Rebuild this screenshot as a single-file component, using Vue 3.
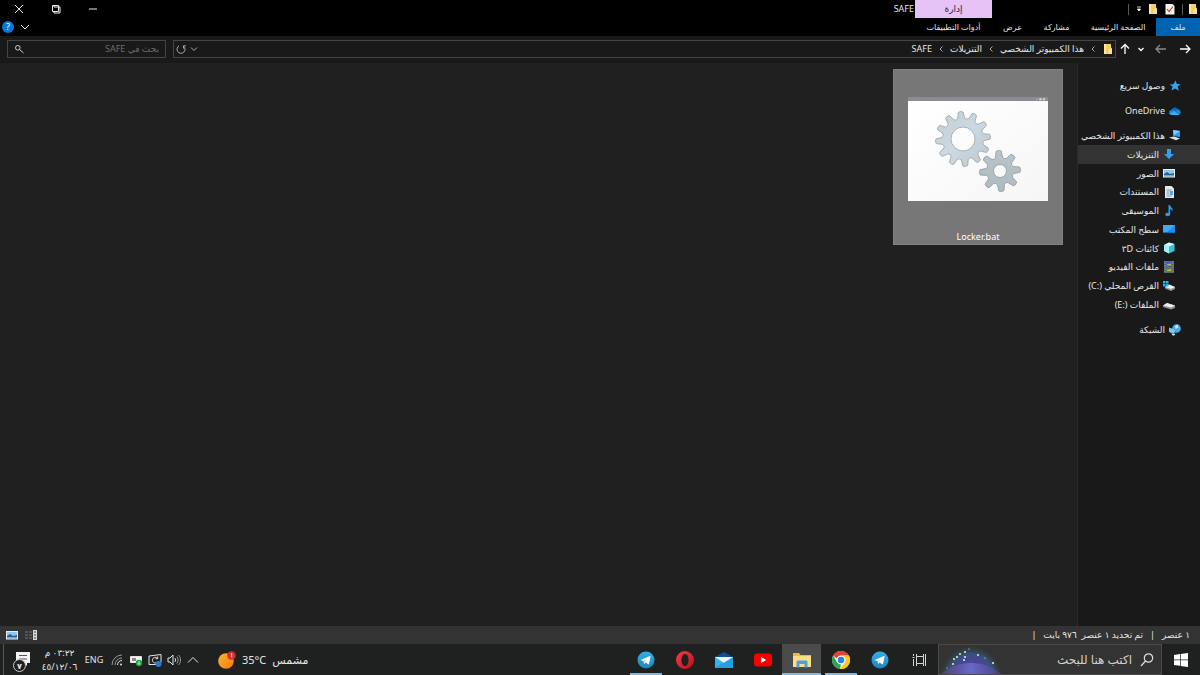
<script setup>
import { ref } from 'vue'

const folderSearch = ref('')
const taskSearch = ref('')
const activeTab = ref('tools')
const selectedPlace = ref('downloads')

const tabs = [
  { id: 'main', label: 'ملف' },
  { id: 'home', label: 'الصفحة الرئيسية' },
  { id: 'share', label: 'مشاركة' },
  { id: 'view', label: 'عرض' },
  { id: 'tools', label: 'أدوات التطبيقات' },
]

const crumbs = ['هذا الكمبيوتر الشخصي', 'التنزيلات', 'SAFE']

const places = [
  { id: 'pc', label: 'هذا الكمبيوتر الشخصي', root: true },
  { id: 'downloads', label: 'التنزيلات' },
  { id: 'pictures', label: 'الصور' },
  { id: 'documents', label: 'المستندات' },
  { id: 'music', label: 'الموسيقى' },
  { id: 'desktop', label: 'سطح المكتب' },
  { id: 'objects', label: 'كائنات', extra: '٣D' },
  { id: 'videos', label: 'ملفات الفيديو' },
  { id: 'diskc', label: 'القرص المحلي', extra: '(C:)' },
  { id: 'diske', label: 'الملفات', extra: '(E:)' },
]

const apps = [
  { id: 'taskview', icon: 'taskview', name: 'عرض المهام' },
  { id: 'tg1', icon: 'telegram', name: 'Telegram' },
  { id: 'chrome', icon: 'chrome', name: 'Chrome', open: true },
  { id: 'explorer', icon: 'explorer', name: 'مستكشف الملفات', active: true },
  { id: 'youtube', icon: 'youtube', name: 'YouTube' },
  { id: 'mail', icon: 'mail', name: 'البريد' },
  { id: 'opera', icon: 'opera', name: 'Opera' },
  { id: 'tg2', icon: 'telegram', name: 'Telegram', open: true },
]

// gear outline with a round hole, drawn around (cx, cy)
function gear(cx, cy, outer, inner, hole, teeth, turn) {
  const step = 360 / teeth
  const at = (r, deg) => {
    const a = ((deg + turn - 90) * Math.PI) / 180
    return (cx + r * Math.cos(a)).toFixed(2) + ' ' + (cy + r * Math.sin(a)).toFixed(2)
  }
  let d = ''
  for (let i = 0; i < teeth; i++) {
    const a = i * step
    d += (i ? 'L' : 'M') + at(inner, a - step * 0.32)
    d += 'L' + at(outer - 1, a - step * 0.17)
    d += 'Q' + at(outer + 0.5, a) + ' ' + at(outer - 1, a + step * 0.17)
    d += 'L' + at(inner, a + step * 0.32)
    d += 'Q' + at(inner - 1.5, a + step * 0.5) + ' ' + at(inner, a + step * 0.68)
  }
  d += 'Z M' + (cx - hole) + ' ' + cy
  d += `a${hole} ${hole} 0 1 0 ${hole * 2} 0a${hole} ${hole} 0 1 0 ${-hole * 2} 0Z`
  return d
}

const bigGear = gear(55, 38, 28, 21, 12, 12, -5)
const smallGear = gear(92, 70, 21, 14, 6.5, 8, -4)

const sparks = [
  [21, 9, 1], [26, 7, 1], [30, 4, 0.6], [15, 14, 1], [25, 15, 1], [18, 12, 1],
  [14, 19, 1], [39, 10, 1], [54, 18, 1], [8, 23, 0.6], [46, 13, 0.6], [26, 12, 1],
]
</script>

<template>
  <div class="screen" dir="rtl">
    <svg class="sprite" aria-hidden="true">
      <defs>
        <linearGradient id="gPaper" x1="0" y1="0" x2="1" y2="1"><stop offset="0" stop-color="#fff" /><stop offset="1" stop-color="#f6f6f7" /></linearGradient>
        <linearGradient id="gGear" x1="0" y1="0" x2="1" y2="1"><stop offset="0" stop-color="#c4ccd2" /><stop offset=".5" stop-color="#ccd9e2" /><stop offset="1" stop-color="#bcc6cd" /></linearGradient>
        <linearGradient id="gGear2" x1="0" y1="0" x2="0" y2="1"><stop offset="0" stop-color="#bac4ca" /><stop offset="1" stop-color="#aebac1" /></linearGradient>
        <linearGradient id="gTg" x1="0" y1="0" x2="0" y2="1"><stop offset="0" stop-color="#37aee2" /><stop offset="1" stop-color="#1b86c0" /></linearGradient>
        <linearGradient id="gOpera" x1="0" y1="0" x2="1" y2="1"><stop offset="0" stop-color="#ff3a45" /><stop offset="1" stop-color="#b3121d" /></linearGradient>
        <linearGradient id="gSun" x1="0" y1="0" x2="1" y2="1"><stop offset="0" stop-color="#ffb52b" /><stop offset="1" stop-color="#f27a12" /></linearGradient>
        <radialGradient id="gDome" cx=".5" cy=".5" r=".5"><stop offset="0" stop-color="#5a56b0" /><stop offset=".55" stop-color="#4a4494" /><stop offset=".75" stop-color="#38507c" /><stop offset="1" stop-color="#33473c" stop-opacity="0" /></radialGradient>
        <linearGradient id="gHill" x1="0" y1="0" x2="1" y2="0"><stop offset="0" stop-color="#5c3f72" stop-opacity=".5" /><stop offset=".5" stop-color="#6b72cc" stop-opacity=".8" /><stop offset="1" stop-color="#4f4388" stop-opacity=".5" /></linearGradient>
      </defs>
      <symbol id="i-folder" viewBox="0 0 12 12">
        <path d="M2 1h7v2l1 8H2z" fill="#f5cf62" /><path d="M2 1h2v10H2z" fill="#ffe9a2" /><path d="M7 6l3-1v6H6z" fill="#ffe08a" />
      </symbol>
      <symbol id="i-check" viewBox="0 0 12 12">
        <path d="M1.500 1h7l2 2v8.500h-9z" fill="#f4f1f1" /><path d="M3 6l2 2.500 4-5" fill="none" stroke="#cf3f2c" stroke-width="1.200" />
      </symbol>
      <symbol id="i-star" viewBox="0 0 12 12">
        <path d="M6.600.5l1.200 3.600 3.900.1-3.100 2.400 1.200 4.200-3.600-2.200-3.700 2 1.100-4L.6 4.500l3.900-.3z" fill="#37a5ee" />
      </symbol>
      <symbol id="i-cloud" viewBox="0 0 12 9">
        <path d="M2.500 8.500a2.500 2.500 0 010-5A3.700 3.700 0 019 2.800a2.900 2.900 0 01.5 5.700z" fill="#1a86d8" /><path d="M1 7.500l4-3 5 4H2.500z" fill="#35b1f4" /><path d="M3 2.500A3.500 3.500 0 019 2.800L6 4.500z" fill="#0f62b0" />
      </symbol>
      <symbol id="i-pc" viewBox="0 0 12 12">
        <path d="M4 1l7 1v6L4 7z" fill="#2b9df0" /><path d="M4 1l7 1-6 4z" fill="#7fd0ff" /><path d="M0 8.500l5-1 6 2-4 1.800z" fill="#dce3e8" />
      </symbol>
      <symbol id="i-downloads" viewBox="0 0 12 12"><path d="M4 1h4v5h3L6 11 1 6h3z" fill="#3a9bea" /></symbol>
      <symbol id="i-pictures" viewBox="0 0 12 12">
        <path d="M0 2h12v8.500H0z" fill="#e8eef3" /><path d="M1 3h10v6.500H1z" fill="#8dc6f2" /><path d="M1 7l3-2 3 2 4-1v3.500H1z" fill="#2c608c" /><path d="M1 8.500h10v1H1z" fill="#d4e7f5" />
      </symbol>
      <symbol id="i-documents" viewBox="0 0 12 12">
        <path d="M2 0h6.500L11 2.500V12H2z" fill="#e3eaf0" /><path d="M3.500 4h5M3.500 6h3M3.500 8h3M3.500 10h5" stroke="#6f9ab8" /><path d="M7 5h3v4H7z" fill="#5fa6d8" />
      </symbol>
      <symbol id="i-music" viewBox="0 0 12 12"><path d="M5.500 0h1.500c0 2 3.500 2.500 2.500 6.500C9 5 8 4.300 7.200 4v5c0 3-5 2.800-5 .5C2.200 8 4.500 7.300 5.500 8z" fill="#259df0" /></symbol>
      <symbol id="i-desktop" viewBox="0 0 12 12"><path d="M0 2h12v8H0z" fill="#1f8fe6" /><path d="M0 2h12L3 10H0z" fill="#3fa9f5" /><path d="M0 9h12v1H0z" fill="#1473bd" /></symbol>
      <symbol id="i-objects" viewBox="0 0 12 12"><path d="M1 3l5-2.500L11.500 2v7L6 11.500 1 9z" fill="#39c1dc" /><path d="M1 3l5 1.500v7L1 9z" fill="#a9eef7" /><path d="M1 3l5-2.500L11.500 2 6 4.500z" fill="#d6f9fc" /></symbol>
      <symbol id="i-videos" viewBox="0 0 12 12">
        <path d="M1 0h10v12H1z" fill="#5b6670" /><path d="M3 1h6v4.500H3z" fill="#4b5fc0" /><path d="M3 6.500h6V11H3z" fill="#5d7f4a" /><path d="M4 3.500l4-1v2H4zM4 9l4-1v2H4z" fill="#c3b64e" /><path d="M2 0v12M10 0v12" stroke="#8d98a0" stroke-dasharray="1 1" />
      </symbol>
      <symbol id="i-diskc" viewBox="0 0 12 12">
        <path d="M2 7l4-2.500L12 7v2L8 11 2 8.500z" fill="#8d9398" /><path d="M2 7l4-2.500L12 7 8 9z" fill="#eef0f1" /><path d="M0 1h2.500v2.500H0zM3 1h2.500v2.500H3zM0 4h2.500v2.500H0zM3 4h2.500v2.500H3z" fill="#27b5ea" />
      </symbol>
      <symbol id="i-diske" viewBox="0 0 12 12"><path d="M0 6.500L4 4l8 2.500V9l-4 1.500L0 8z" fill="#8d9398" /><path d="M0 6.500L4 4l8 2.500-4 2z" fill="#eef0f1" /></symbol>
      <symbol id="i-network" viewBox="0 0 12 12">
        <circle cx="7.500" cy="4.500" r="4.300" fill="#4aa9e4" /><path d="M6 2l2.500-1.500 1 3L6.500 5z" fill="#bfe6f8" /><path d="M0 3.500l5.500 2v4.500L0 8z" fill="#6ccdf7" /><path d="M2 9.500L6 10v1l-2 .8z" fill="#cfd8dd" />
      </symbol>
      <symbol id="i-telegram" viewBox="0 0 18 18">
        <circle cx="9" cy="9" r="8.500" fill="url(#gTg)" /><path d="M3.500 9l9.500-4c.5-.1.7.2.6.6L12 13c-.1.400-.5.500-.8.300L8.700 11.500l-1.300 1.300c-.2.200-.5.100-.5-.2l-.2-2.400z" fill="#fff" /><path d="M6.700 10.200l5-3.500-3.700 4-.6 2z" fill="#bfdff0" />
      </symbol>
      <symbol id="i-chrome" viewBox="0 0 18 18">
        <circle cx="9" cy="9" r="9" fill="#fff" />
        <path d="M1.200 4.500a9 9 0 0115.600 0H9a4.500 4.500 0 00-4.200 3z" fill="#e8412f" /><path d="M1.200 4.500L5.100 11.200A4.500 4.500 0 009 13.500l-1 4.450A9 9 0 011.200 4.500z" fill="#31a350" /><path d="M16.800 4.500A9 9 0 018 17.950l4.900-6.700A4.500 4.500 0 0012.300 6L9 4.500z" fill="#fbc91c" />
        <circle cx="9" cy="9" r="4.300" fill="#fff" /><circle cx="9" cy="9" r="3.300" fill="#2f7de9" />
      </symbol>
      <symbol id="i-explorer" viewBox="0 0 18 18">
        <path d="M0 2h6l1.500 2H18v12H0z" fill="#f0b93c" /><path d="M0 5h18v11H0z" fill="#ffdf86" /><path d="M3.500 16.500V11c0-1 .5-1.500 1.500-1.500h8c1 0 1.500.5 1.500 1.500v5.500h-3V13h-5v3.500z" fill="#4aa3df" />
      </symbol>
      <symbol id="i-youtube" viewBox="0 0 18 18"><rect y="2.500" width="18" height="13" rx="3" fill="#f70000" /><path d="M7 6l5.200 3L7 12z" fill="#fff" /></symbol>
      <symbol id="i-mail" viewBox="0 0 18 18">
        <path d="M0 6l9-5 9 5v3H0z" fill="#0f4f95" /><path d="M0 6h18v11H0z" fill="#37b2f0" /><path d="M0 6h18l-9 6z" fill="#eaf6fd" /><path d="M0 17L18 6v11z" fill="#1687d2" opacity=".5" />
      </symbol>
      <symbol id="i-opera" viewBox="0 0 18 18"><path d="M9 0a9 9 0 100 18A9 9 0 009 0zm0 3c2.200 0 3.500 2.600 3.500 6S11.200 15 9 15s-3.500-2.600-3.500-6S6.800 3 9 3z" fill="url(#gOpera)" fill-rule="evenodd" /></symbol>
      <symbol id="i-taskview" viewBox="0 0 18 18"><path d="M6.500 3v2.500h7V3M6.500 15v-2.500h7V15M6.500 5.500v7M13.500 5.500v7M3.500 3v2M3.500 8v7M2.500 6.500h2M15.500 3v12" fill="none" stroke="#d6d6d6" /></symbol>
    </svg>

    <header class="ribbon">
      <div class="title-row">
        <svg class="ic first"><use href="#i-folder" /></svg>
        <i class="sep"></i>
        <button class="quick" aria-label="خصائص"><svg class="ic"><use href="#i-check" /></svg></button>
        <button class="quick" aria-label="مجلد جديد"><svg class="ic"><use href="#i-folder" /></svg></button>
        <button class="quick small" aria-label="تخصيص"><svg viewBox="0 0 6 6" class="tiny"><path d="M1 1h4M1.500 3h3L3 5z" stroke="#fff" stroke-width=".8" fill="#fff" /></svg></button>
        <i class="sep"></i>
        <div class="manage">إدارة</div>
        <span class="win-title">SAFE</span>
        <div class="win-buttons">
          <button aria-label="تصغير"><svg viewBox="0 0 10 10"><path d="M1 5h8" /></svg></button>
          <button aria-label="استعادة"><svg viewBox="0 0 10 10"><path d="M1.500 1.500h6v6h-6zM3 1.500V3M3 3h6v6H3V7.500" /></svg></button>
          <button aria-label="إغلاق"><svg viewBox="0 0 10 10"><path d="M1 1l8 8M9 1L1 9" /></svg></button>
        </div>
      </div>
      <nav class="tab-row">
        <button v-for="t in tabs" :key="t.id" :class="['tab', t.id, { current: activeTab === t.id }]" @click="activeTab = t.id">{{ t.label }}</button>
        <button class="expand" aria-label="توسيع الشريط"><svg viewBox="0 0 10 10" class="chev"><path d="M1 3l4 4 4-4" /></svg></button>
        <button class="help" aria-label="تعليمات">?</button>
      </nav>
    </header>

    <div class="address-row">
      <button class="nav-btn" aria-label="السابق"><svg viewBox="0 0 12 12"><path d="M1 6h10M7 2l4 4-4 4" stroke="#fff" /></svg></button>
      <button class="nav-btn" aria-label="التالي"><svg viewBox="0 0 12 12"><path d="M11 6H1M5 2L1 6l4 4" stroke="#8a8a8a" /></svg></button>
      <button class="nav-btn narrow" aria-label="المواقع الأخيرة"><svg viewBox="0 0 12 12"><path d="M3.500 5L6 7.500 8.500 5" stroke="#fff" /></svg></button>
      <button class="nav-btn narrow" aria-label="للأعلى"><svg viewBox="0 0 12 12"><path d="M6 11V1.500M2 5.500l4-4 4 4" stroke="#fff" /></svg></button>
      <div class="path-box">
        <svg class="ic"><use href="#i-folder" /></svg>
        <template v-for="c in crumbs" :key="c">
          <svg viewBox="0 0 6 8" class="crumb-sep"><path d="M4.500 1.500L2 4l2.500 2.500" /></svg>
          <a href="#" @click.prevent>{{ c }}</a>
        </template>
        <button class="path-btn push" aria-label="المواقع السابقة"><svg viewBox="0 0 10 10"><path d="M2 3.500l3 3 3-3" /></svg></button>
        <button class="path-btn" aria-label="تحديث"><svg viewBox="0 0 10 10"><path d="M3 1.800a4 4 0 104.500.3M7.500 4.500V1.800h2.300" /></svg></button>
      </div>
      <label class="find">
        <input v-model="folderSearch" type="text" placeholder="بحث في SAFE" aria-label="بحث في SAFE" />
        <svg viewBox="0 0 10 10"><circle cx="3.800" cy="3.800" r="2.300" /><path d="M5.500 5.500l4 3.500" /></svg>
      </label>
    </div>

    <div class="body">
      <aside class="places">
        <a href="#" class="place root" @click.prevent><svg class="ic"><use href="#i-star" /></svg>وصول سريع</a>
        <a href="#" class="place root" @click.prevent><svg class="ic"><use href="#i-cloud" /></svg>OneDrive</a>
        <div class="tree">
          <a v-for="p in places" :key="p.id" href="#" :class="['place', { root: p.root, selected: selectedPlace === p.id }]" @click.prevent="selectedPlace = p.id">
            <svg class="ic"><use :href="'#i-' + p.id" /></svg>
            <span>{{ p.label }} <bdi v-if="p.extra" dir="ltr">{{ p.extra }}</bdi></span>
          </a>
        </div>
        <a href="#" class="place root" @click.prevent><svg class="ic"><use href="#i-network" /></svg>الشبكة</a>
      </aside>
      <main class="files">
        <button class="file">
          <svg class="thumb" viewBox="0 0 140 104">
            <path d="M0 0h140v4H0z" fill="#8b8b94" />
            <path d="M128 2.500h2M131.500 1.500h2v1.500h-2zM135 1.500h2v1.500h-2z" fill="#d0d0d4" stroke="#d0d0d4" stroke-width=".5" />
            <path d="M0 4h140v100H0z" fill="url(#gPaper)" />
            <path :d="bigGear" fill="url(#gGear)" fill-rule="evenodd" stroke="#98a2a8" stroke-width=".8" transform="translate(0 4)" />
            <path :d="smallGear" fill="url(#gGear2)" fill-rule="evenodd" stroke="#8e999f" stroke-width=".8" transform="translate(0 4)" />
          </svg>
          <span>Locker.bat</span>
        </button>
      </main>
    </div>

    <div class="status">
      <span>١ عنصر</span><i>|</i><span>تم تحديد ١ عنصر&nbsp; ٩٧٦ بايت</span><i>|</i>
      <button class="push" aria-label="تفاصيل"><svg viewBox="0 0 12 12"><path d="M8 1h4v10H8z" fill="#d8d8d8" /><path d="M9 3h2M9 6h2M9 9h2" stroke="#444" /><path d="M0 3h3M4 3h3M0 6h3M4 6h3M0 9h3M4 9h3" stroke="#777" /></svg></button>
      <button aria-label="أيقونات كبيرة"><svg class="ic"><use href="#i-pictures" /></svg></button>
    </div>

    <footer class="taskbar">
      <button class="start" aria-label="ابدأ"><svg viewBox="0 0 14 14"><path d="M0 2l6-.9v5.500H0zM6.700 1L14 0v6.600H6.700zM0 7.300h6v5.500L0 12zM6.700 7.300H14V14l-7.300-1z" fill="#fff" /></svg></button>
      <label class="task-search">
        <svg viewBox="0 0 14 14" class="lens"><circle cx="8.500" cy="5" r="4.200" /><path d="M5.500 8L1 13" /></svg>
        <input v-model="taskSearch" type="text" placeholder="اكتب هنا للبحث" aria-label="اكتب هنا للبحث" />
        <svg viewBox="0 0 64 30" class="glow">
          <ellipse cx="32" cy="32" rx="31" ry="31" fill="url(#gDome)" />
          <path d="M0 30c10-8 20-12 32-12s22 4 32 12z" fill="url(#gHill)" />
          <circle v-for="(s, i) in sparks" :key="i" :cx="s[0]" :cy="s[1]" :r="s[2]" :fill="i % 3 ? '#d9f3f2' : '#e6f0a8'" />
        </svg>
      </label>
      <button v-for="a in apps" :key="a.id" :class="['app', { open: a.open, active: a.active }]" :aria-label="a.name"><svg><use :href="'#i-' + a.icon" /></svg></button>

      <button class="weather">
        <span>مشمس</span><span dir="ltr">35°C</span>
        <svg viewBox="0 0 18 18"><circle cx="8" cy="10" r="7.800" fill="url(#gSun)" /><circle cx="13.500" cy="4.500" r="4.300" fill="#d32f2f" /><path d="M12.700 3.200l1-.7v4" fill="none" stroke="#fff" stroke-width=".8" /></svg>
      </button>
      <div class="tray">
        <svg viewBox="0 0 14 14"><path d="M2 9.500L7 4.500l5 5" /></svg>
        <svg viewBox="0 0 14 14"><path d="M1 5v4h2l3 3V2L3 5zM8 5.200c.8 1 .8 2.600 0 3.600" /><path d="M9.800 3.500c1.700 2 1.700 5 0 7M11.600 2c2.600 3 2.600 7 0 10" stroke="#999" /></svg>
        <svg viewBox="0 0 14 14"><path d="M1 3l12-1.500v8M1 3v8.500h7" /><path d="M9.500 5.500a2.800 2.800 0 10.200 3M9.700 3.500v2.200H7.500" /><circle cx="10.500" cy="11" r="3" fill="#2b78d4" stroke="none" /></svg>
        <svg viewBox="0 0 14 14"><path d="M1.500 3.500h11v6h-11z" fill="#f2f2f2" /><path d="M3 5h4v3H3z" fill="#888" stroke="none" /><circle cx="10" cy="10" r="3.200" fill="#16a33a" stroke="none" /><path d="M10 8v3.500M8.800 10.300l1.200 1.200 1.200-1.200" /></svg>
        <svg viewBox="0 0 14 14"><path d="M2 12A10 10 0 0112 2M5 12a7 7 0 017-7" stroke="#999" /><path d="M7.500 12A4.500 4.500 0 0112 7.500" /><circle cx="11" cy="11.500" r="1" fill="#ddd" stroke="none" /></svg>
      </div>
      <button class="lang">ENG</button>
      <button class="clock"><span>٠٣:٢٢ م</span><span dir="ltr">٤٥/١٢/٠٦</span></button>
      <button class="notify" aria-label="الإشعارات">
        <svg viewBox="0 0 20 18"><path d="M6 1h14v11h-3v3l-3-3H6z" fill="#f4f4f4" /><path d="M9 4.500h8M9 8h8" stroke="#555" /></svg>
        <b>٧</b>
      </button>
    </footer>
  </div>
</template>

<style>
body {
  background: #202020;
  overflow: hidden;
}
</style>

<style scoped>
.screen {
  height: 100vh;
  display: flex;
  flex-direction: column;
  background: #202020;
  color: #e6e6e6;
  font-family: "Noto Sans", "DejaVu Sans", sans-serif;
  font-size: 9px;
  line-height: 18px;
}
.sprite {
  position: absolute;
  width: 0;
  height: 0;
}
button {
  background: none;
  border: none;
  padding: 0;
  margin: 0;
  color: inherit;
  font: inherit;
  display: flex;
  align-items: center;
  justify-content: center;
}
a {
  color: inherit;
  text-decoration: none;
}
input {
  min-width: 0;
  border: none;
  outline: none;
  padding: 0;
  background: none;
  color: #e6e6e6;
  font: inherit;
}
svg {
  display: block;
  flex: none;
}
.ic {
  width: 12px;
  height: 12px;
}
.push {
  margin-right: auto;
}

.ribbon {
  background: #000;
}
.title-row,
.tab-row {
  display: flex;
  align-items: center;
  height: 18px;
}
.title-row .first {
  margin-right: 1px;
}
.sep {
  width: 1px;
  height: 11px;
  margin: 0 4px;
  background: #5a5a5a;
}
.quick {
  width: 17px;
}
.quick.small {
  width: 11px;
}
.quick + .sep {
  margin-left: 136px;
}
.tiny {
  width: 6px;
  height: 6px;
}
.manage {
  width: 77px;
  height: 18px;
  background: #e6c3f7;
  color: #2b1c33;
  text-align: center;
}
.win-title {
  margin-right: 1px;
}
.win-buttons {
  display: flex;
  margin-right: auto;
}
.win-buttons button {
  width: 37px;
}
.win-buttons svg,
.chev {
  width: 10px;
  height: 10px;
  fill: none;
  stroke: #eee;
}
.tab {
  height: 18px;
  white-space: nowrap;
  font-size: 8px;
}
.tab.main {
  width: 44px;
  background: #0063b1;
}
.tab.home {
  width: 76px;
}
.tab.share {
  width: 47px;
}
.tab.view {
  width: 41px;
}
.tab.tools {
  width: 77px;
}
.expand {
  margin-right: auto;
  width: 22px;
}
.help {
  width: 12px;
  height: 12px;
  margin-left: 2px;
  border-radius: 50%;
  background: #0a78d4;
  color: #fff;
  line-height: 12px;
}

.address-row {
  display: flex;
  align-items: center;
  height: 26px;
  padding: 0 3px 1px 7px;
  background: #191919;
}
.nav-btn {
  width: 24px;
}
.nav-btn.narrow {
  width: 16px;
}
.nav-btn svg {
  width: 12px;
  height: 12px;
  fill: none;
  stroke-width: 1.3;
}
.path-box {
  flex: 1;
  display: flex;
  align-items: center;
  height: 16px;
  margin: 0 1px 0 7px;
  padding-right: 1px;
  border: 1px solid #454545;
}
.crumb-sep {
  width: 6px;
  height: 8px;
  margin: 0 6px;
  fill: none;
  stroke: #aaa;
}
.path-btn {
  width: 13px;
}
.path-btn svg,
.find svg {
  width: 10px;
  height: 10px;
  fill: none;
  stroke: #aaa;
}
.find {
  display: flex;
  align-items: center;
  width: 145px;
  height: 16px;
  padding: 0 6px;
  border: 1px solid #454545;
}
.find input {
  flex: 1;
}
.find input::placeholder {
  color: #6c6c6c;
  opacity: 1;
}
.find svg {
  stroke: #ccc;
}

.body {
  flex: 1;
  min-height: 0;
  display: flex;
}
.places {
  width: 122px;
  padding-top: 13px;
  display: flex;
  flex-direction: column;
  gap: 6px;
  background: #191919;
  border-left: 1px solid #2b2b2b;
}
.tree {
  display: flex;
  flex-direction: column;
  height: 188px;
}
.tree .place {
  flex: 1;
}
.place {
  display: flex;
  align-items: center;
  gap: 4px;
  min-height: 0;
  padding-right: 25px;
  line-height: 19px;
  white-space: nowrap;
}
.place.root {
  padding-right: 19px;
}
.place.selected {
  background: #333;
}
.files {
  flex: 1;
  padding: 6px 14px;
}
.file {
  flex-direction: column;
  justify-content: space-between;
  width: 170px;
  height: 176px;
  padding: 27px 0 0;
  background: #777;
  border: 1px solid #808080;
  color: #fff;
}
.thumb {
  width: 140px;
  height: 104px;
}
.file span {
  line-height: 14px;
}

.status {
  display: flex;
  align-items: center;
  gap: 7px;
  height: 18px;
  padding: 0 10px 0 6px;
  background: #333;
}
.status i {
  font-style: normal;
}
.status svg {
  width: 12px;
  height: 12px;
}

.taskbar {
  display: flex;
  align-items: stretch;
  height: 31px;
  background: #1f2120;
}
.start {
  width: 38px;
}
.start svg {
  width: 14px;
  height: 14px;
}
.task-search {
  display: flex;
  align-items: center;
  gap: 8px;
  box-sizing: border-box;
  width: 224px;
  padding-right: 7px;
  background: #333;
  border: 1px solid #4a4a4a;
  overflow: hidden;
}
.task-search input {
  flex: 1;
  font-size: 12px;
}
.task-search input::placeholder {
  color: #d0d0d0;
  opacity: 1;
}
.lens {
  width: 14px;
  height: 14px;
  fill: none;
  stroke: #ddd;
  stroke-width: 1.2;
}
.glow {
  width: 64px;
  height: 30px;
}
.app {
  width: 39px;
  border-bottom: 2px solid transparent;
  border-top: 2px solid transparent;
  box-sizing: border-box;
}
.app svg {
  width: 18px;
  height: 18px;
}
.app.open {
  background: linear-gradient(#76b9ed, #76b9ed) center bottom / 32px 2px no-repeat border-box;
}
.app.active {
  background: #4b4b4b border-box;
  border-top-color: #4b4b4b;
  border-bottom-color: #76b9ed;
}
.weather {
  margin-right: auto;
  gap: 6px;
  font-size: 11px;
}
.weather svg {
  width: 18px;
  height: 18px;
}
.tray {
  display: flex;
  align-items: center;
  gap: 5px;
  margin: 0 18px 0 6px;
}
.tray svg {
  width: 14px;
  height: 14px;
  fill: none;
  stroke: #e4e4e4;
}
.lang {
  width: 20px;
}
.clock {
  width: 49px;
  flex-direction: column;
  line-height: 14px;
}
.notify {
  position: relative;
  width: 32px;
  margin-left: 3px;
  border-left: 1px solid #555;
}
.notify svg {
  width: 20px;
  height: 18px;
}
.notify b {
  position: absolute;
  left: 9px;
  bottom: 3px;
  width: 11px;
  height: 11px;
  border: 1px solid #ccc;
  border-radius: 50%;
  background: #1f2120;
  font-size: 8px;
  line-height: 11px;
}
</style>
